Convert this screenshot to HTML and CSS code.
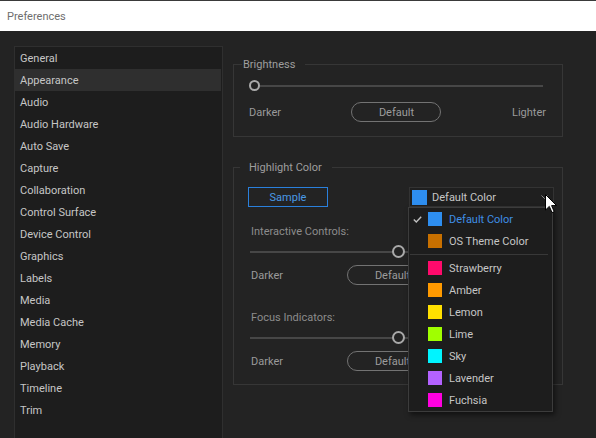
FILE: index.html
```html
<!DOCTYPE html>
<html lang="en">
<head>
    <meta charset="UTF-8">
    <title>Preferences</title>
    <link rel="stylesheet" href="styles.css">
</head>
<body>
    <div class="titlebar">Preferences</div>
    <div class="main">
        <div class="sidebar">
            <div class="nav-item">General</div>
            <div class="nav-item active">Appearance</div>
            <div class="nav-item">Audio</div>
            <div class="nav-item">Audio Hardware</div>
            <div class="nav-item">Auto Save</div>
            <div class="nav-item">Capture</div>
            <div class="nav-item">Collaboration</div>
            <div class="nav-item">Control Surface</div>
            <div class="nav-item">Device Control</div>
            <div class="nav-item">Graphics</div>
            <div class="nav-item">Labels</div>
            <div class="nav-item">Media</div>
            <div class="nav-item">Media Cache</div>
            <div class="nav-item">Memory</div>
            <div class="nav-item">Playback</div>
            <div class="nav-item">Timeline</div>
            <div class="nav-item">Trim</div>
        </div>

        <div class="content">
            <fieldset class="group brightness">
                <legend>Brightness</legend>
                <div class="slider small">
                    <div class="track"></div>
                    <div class="knob" style="left: 0%"></div>
                </div>
                <div class="btn-row">
                    <span class="dim">Darker</span>
                    <button class="pill">Default</button>
                    <span class="dim">Lighter</span>
                </div>
            </fieldset>

            <fieldset class="group highlight">
                <legend>Highlight Color</legend>
                <div class="top-row">
                    <button class="sample">Sample</button>
                    <div class="dropdown-wrap">
                        <div class="dropdown">
                            <span class="swatch big" style="background: #2e8ef0"></span>
                            <span class="dd-label">Default Color</span>
                            <svg class="chevron" width="7" height="5" viewBox="0 0 7 5"><polyline points="0.5,0.5 3.5,3.5 6.5,0.5" fill="none" stroke="#8a8a8a" stroke-width="1"/></svg>
                        </div>
                        <div class="menu">
                            <div class="menu-item selected">
                                <svg class="check" width="9" height="7" viewBox="0 0 9 7"><polyline points="0.8,3.5 3.3,6 8.2,0.8" fill="none" stroke="#c0c0c0" stroke-width="1.4"/></svg>
                                <span class="swatch" style="background: #2e8ef0"></span>Default Color
                            </div>
                            <div class="menu-item"><span class="swatch" style="background: #c87000"></span>OS Theme Color</div>
                            <div class="menu-sep"></div>
                            <div class="menu-item"><span class="swatch" style="background: #ff0a6c"></span>Strawberry</div>
                            <div class="menu-item"><span class="swatch" style="background: #ff9a00"></span>Amber</div>
                            <div class="menu-item"><span class="swatch" style="background: #ffe000"></span>Lemon</div>
                            <div class="menu-item"><span class="swatch" style="background: #a0ff00"></span>Lime</div>
                            <div class="menu-item"><span class="swatch" style="background: #00f4ff"></span>Sky</div>
                            <div class="menu-item"><span class="swatch" style="background: #b462ff"></span>Lavender</div>
                            <div class="menu-item"><span class="swatch" style="background: #ff00e0"></span>Fuchsia</div>
                        </div>
                        <svg class="cursor" width="13" height="20" viewBox="0 0 13 20"><path d="M0.5,0.5 L0.5,16 L4.3,12.4 L7,18.6 L9.2,17.6 L6.6,11.6 L11.6,11.6 Z" fill="#fff" stroke="#000" stroke-width="1"/></svg>
                    </div>
                </div>

                <div class="field-label">Interactive Controls:</div>
                <div class="slider">
                    <div class="track"></div>
                    <div class="knob" style="left: 50%"></div>
                </div>
                <div class="btn-row">
                    <span class="dim">Darker</span>
                    <button class="pill">Default</button>
                    <span class="dim">Lighter</span>
                </div>

                <div class="field-label gap">Focus Indicators:</div>
                <div class="slider">
                    <div class="track"></div>
                    <div class="knob" style="left: 50%"></div>
                </div>
                <div class="btn-row">
                    <span class="dim">Darker</span>
                    <button class="pill">Default</button>
                    <span class="dim">Lighter</span>
                </div>
            </fieldset>
        </div>
    </div>
</body>
</html>
```

FILE: styles.css
```css
  /* Window */
  body {
      margin: 0;
      height: 438px;
      overflow: hidden;
      background: #232323;
      color: #c6c6c6;
      font-family: Roboto, "Noto Sans", sans-serif;
      font-size: 11px;
  }

  .titlebar {
      height: 30px;
      border-top: 1px solid #3a3a3a;
      background: #fff;
      color: #6e6e6e;
      padding-left: 7px;
      display: flex;
      align-items: center;
  }

  .main {
      display: flex;
      padding: 15px 0 0 14px;
  }

  /* Category list */
  .sidebar {
      width: 207px;
      height: 400px;
      border: 1px solid #2f2f2f;
      background: #1d1d1d;
  }

  .nav-item {
      height: 20px;
      line-height: 20px;
      padding: 2px 0 0 5px;
  }

  .nav-item.active {
      background: #2f2f2f;
      margin-right: 1px;
  }

  /* Right side */
  .content {
      width: 330px;
      margin-left: 10px;
      padding-top: 11px;
  }

  .group {
      margin: 0;
      min-width: 0;
      border: 1px solid #363636;
      padding: 0 19px 14px 15px;
  }

  .group legend {
      line-height: 13px;
      padding-top: 1px;
      color: #9e9e9e;
  }

  .brightness legend {
      margin-left: -7px;
      padding-left: 1px;
      padding-right: 10px;
  }

  .highlight {
      margin-top: 23px;
      padding: 0 8px 13px 15px;
  }

  .highlight legend {
      margin-left: -9px;
      padding-left: 9px;
      padding-right: 10px;
  }

  .dim {
      color: #9a9a9a;
  }

  /* Sliders */
  .slider {
      position: relative;
      height: 13px;
      margin: 6px 8px 0 1px;
  }

  .slider.small {
      height: 11px;
      margin: 9px 0 0 0;
  }

  .track {
      position: absolute;
      left: 0;
      right: 0;
      top: 50%;
      height: 2px;
      margin-top: -1px;
      background: #474747;
  }

  .knob {
      position: absolute;
      top: 0;
      width: 9px;
      height: 9px;
      margin-left: -6px;
      border: 2px solid #a9a9a9;
      border-radius: 50%;
      background: #232323;
  }

  .slider.small .knob {
      width: 7px;
      height: 7px;
      margin-left: 0;
  }

  .btn-row {
      display: flex;
      justify-content: space-between;
      align-items: center;
      margin-top: 11px;
      margin-right: -3px;
  }

  .highlight .btn-row {
      margin: 7px 18px 0 2px;
  }

  .pill {
      width: 90px;
      height: 20px;
      border: 1px solid #737373;
      border-radius: 10px;
      background: transparent;
      color: #9c9c9c;
      font-family: inherit;
      font-size: 11px;
      padding: 0;
  }

  .field-label {
      margin: 18px 0 0 2px;
      line-height: 14px;
      color: #8c8c8c;
  }

  .field-label.gap {
      margin-top: 26px;
  }

  /* Highlight top row */
  .top-row {
      display: flex;
      justify-content: space-between;
      margin-top: 13px;
      height: 20px;
  }

  .sample {
      width: 80px;
      height: 20px;
      margin-left: -1px;
      border: 1px solid #2a80dc;
      background: transparent;
      color: #4a9ae6;
      font-family: inherit;
      font-size: 11px;
      padding: 0;
  }

  .dropdown-wrap {
      position: relative;
      width: 145px;
  }

  .dropdown {
      height: 18px;
      border: 1px solid #333;
      background: #1f1f1f;
      display: flex;
      align-items: center;
  }

  .swatch {
      width: 14px;
      height: 14px;
      margin-right: 7px;
      flex: none;
  }

  .swatch.big {
      width: 15px;
      height: 15px;
      margin: 0 5px 0 2px;
  }

  .dd-label {
      flex: 1;
  }

  .chevron {
      margin-right: 5px;
  }

  /* Dropdown menu */
  .menu {
      position: absolute;
      top: 20px;
      left: -1px;
      width: 143px;
      border: 1px solid #3c3c3c;
      background: #1d1d1d;
      box-shadow: 2px 3px 5px rgba(0, 0, 0, 0.5);
      z-index: 5;
  }

  .menu-item {
      position: relative;
      height: 22px;
      display: flex;
      align-items: center;
      padding-left: 19px;
  }

  .menu-item.selected {
      color: #3f8fe6;
  }

  .check {
      position: absolute;
      left: 4px;
      top: 8px;
  }

  .menu-sep {
      height: 1px;
      margin: 2px 4px 2px 1px;
      background: #383838;
  }

  .cursor {
      position: absolute;
      left: 136px;
      top: 7px;
      z-index: 10;
  }
```
